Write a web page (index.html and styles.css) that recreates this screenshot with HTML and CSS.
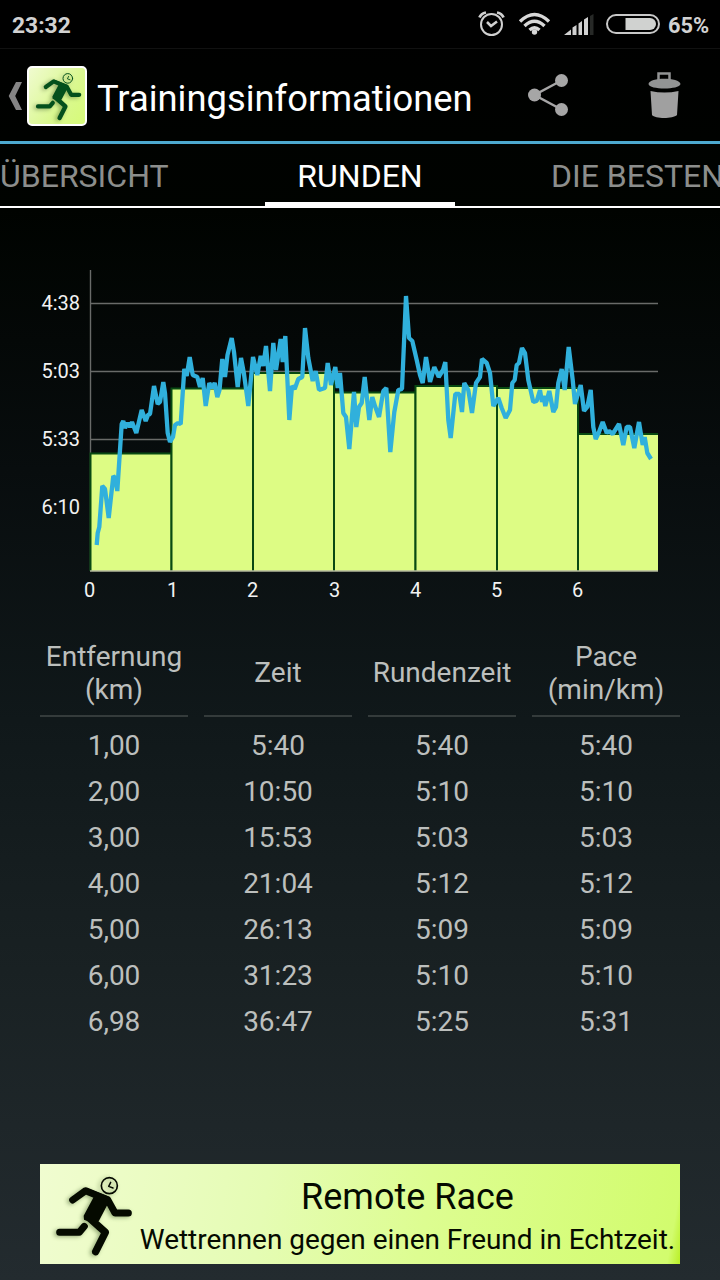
FILE: index.html
```html
<!DOCTYPE html>
<html lang="de">
<head>
<meta charset="utf-8">
<title>Trainingsinformationen</title>
<link rel="stylesheet" href="styles.css">
</head>
<body>
<svg class="defs" width="0" height="0" aria-hidden="true">
  <symbol id="runner" viewBox="70 60 245 245">
    <g fill="none" stroke="currentColor" stroke-linecap="round" stroke-linejoin="round">
      <g stroke-width="21">
        <path d="M129 135 168 107 234 134 256 174H296"/>
        <path d="M90 232H149L164 214"/>
        <path stroke-width="22" d="M180 190 227 232 198 290"/>
      </g>
      <circle cx="239" cy="92" r="24" stroke-width="5"/>
      <path stroke-width="4.500" d="M243 82 237 94 250 99"/>
    </g>
    <path fill="currentColor" d="M170 98 240 126 237 142 208 197 190 205 163 194 162 182 192 126Z"/>
  </symbol>
</svg>
<div class="screen">
  <header class="status">
    <span class="clock">23:32</span>
    <svg class="status-icons" width="196" height="32" viewBox="470 8 196 32">
      <g fill="none" stroke="#d0d0d0" stroke-width="2">
        <circle cx="491.500" cy="24.500" r="10.500"/>
        <path stroke-width="2.500" d="M487 22 491 26 497 21.500"/>
        <path stroke-width="2.800" d="M479.500 17.500Q481 13.500 486 12.500M503.500 17.500Q502 13.500 497 12.500"/>
      </g>
      <g fill="none" stroke="#d8d8d8" stroke-width="3.400">
        <path d="M520 21.500Q534.500 7.500 549 21.500"/>
        <path d="M524.500 26Q534.500 16.500 544.500 26"/>
        <path d="M529.500 30Q534.500 25.500 539.500 30"/>
      </g>
      <circle cx="534.500" cy="32" r="2.700" fill="#d8d8d8"/>
      <path fill="#d0d0d0" d="M564 35 571 29.500V35ZM572.500 27.500 576.500 25V35H572.500ZM578.500 23.500 582 21V35H578.500ZM584 19.500 588 17V35H584Z"/>
      <path fill="#272927" d="M590 16 593.500 14V35H590Z"/>
      <rect x="607" y="15" width="52" height="18" rx="9" fill="none" stroke="#c8c8c8" stroke-width="2"/>
      <path fill="#d0d2d0" d="M625.500 18H650A6 6 0 0 1 650 30H625.500Z"/>
    </svg>
    <span class="percent">65%</span>
  </header>

  <div class="actionbar">
    <svg class="back" width="14" height="30" viewBox="0 0 14 30"><path fill="#858585" d="M8 1H14L7.200 15 14 29H8L.700 15Z"/></svg>
    <div class="appicon"><svg width="49" height="49"><use href="#runner"/></svg></div>
    <h1>Trainingsinformationen</h1>
    <svg class="share" width="42" height="44" viewBox="527 73 42 44">
      <path d="M561.500 80.500 534.500 95 561.500 109.500" fill="none" stroke="#a6a6a6" stroke-width="2.500"/>
      <g fill="#a6a6a6"><circle cx="534.500" cy="95" r="6.500"/><circle cx="561.500" cy="80.500" r="6.500"/><circle cx="561.500" cy="109.500" r="6.500"/></g>
    </svg>
    <svg class="trash" width="34" height="48" viewBox="647 71 34 48">
      <path d="M658.500 80V73.500H669.500V80" fill="none" stroke="#929494" stroke-width="2.500"/>
      <path fill="#929494" d="M648.500 84C649 77 679.500 77 680.500 84C679.500 90 649 90 648.500 84Z"/>
      <path fill="#a0a0a0" d="M650.500 91Q664.500 94 678.500 91L677 115C673 119 655 119 652 115Z"/>
    </svg>
  </div>

  <nav class="tabs">
    <span class="tab first">ÜBERSICHT</span>
    <span class="tab active">RUNDEN</span>
    <span class="tab last">DIE BESTEN</span>
  </nav>

  <svg class="chart" width="720" height="350" viewBox="0 260 720 350">
    <path class="grid" d="M90 303.500H658M90 371.500H658M90 439.500H658M90.500 270V571"/>
    <g class="bars">
      <path d="M90.500 571V453.500H171.500V571"/>
      <path d="M171.500 571V388.500H253V571"/>
      <path d="M253 571V373H334V571"/>
      <path d="M334 571V392.500H415.500V571"/>
      <path d="M415.500 571V386H497V571"/>
      <path d="M497 571V388H578V571"/>
      <path d="M578 571V434H658"/>
      <path class="last-bar" d="M579 435H658V571H579Z"/>
    </g>
    <path class="cutoff" d="M90 571H658"/>
    <polyline class="pace" points="96.700,545 97.700,533 99.300,527 102.300,486 105,489 108.700,518 113.300,476 115,478 117.300,491 121.700,424 123.300,421 125,428 127.700,423 130,427 132,422 136.300,433 141.700,410 145.700,421 148,415 150,414 154,386 157.700,404 160,402 163.300,382 165,393 167.700,433 170,442 173,437 175,425 178,423 180.700,424 184.300,369 186.700,376 189.700,357 192.700,375 195,376 197.300,377 200,387 202.700,378 205.700,406 209.300,383 212,388 214.700,383 217.300,397 219.500,390 222.300,359 225,377 227.500,355 231.700,338 234,352 237.700,387 241,358 244,374 248.300,406 253,357 257.300,375 260.700,356 263.300,366 266,346 270,391 273.300,343 276,370 280.700,339 282.700,362 285.300,336 289.300,420 292,386 294.700,389 298.300,379 302.300,377 305,328 308.300,358 312.700,381 315.700,371 319,390 325,388 327.700,363 331,385 335.300,367 337.700,388 340,373 343.300,413 346,417 349.300,449 354,392 356.300,427 359,407 361.700,403 364.700,377 369.300,420 372.300,397 375,406 379,417 383.300,391 386.300,388 390.300,452 394.300,412 398.300,390 402,389 406,296 409,338 412.300,341 416.700,360 420,375 422.700,383 426,357 430,382 434.300,367 438.700,377 443,370 445.300,362 448.300,420 450.700,438 455.300,394 459.300,394 462,412 464.300,383 468.300,390 472,413 476,383 480,377 482,359 486.700,363 490,373 493.300,406 498.300,398 501.700,408 505.700,418 510,410 512.300,383 514.700,380 516.700,365 519,363 522,348 525,353 528.300,380 533.300,402 536.700,401 540,390 542,402 543.500,396 545.300,406 549.300,391 553.300,412 556,407 558.300,383 561.700,369 564.700,390 568.700,347 572.700,380 575,404 580.700,385 584,411 587.300,407 590.700,390 593.300,427 595.700,439 599,432 602.700,422 606.700,433 609,431 612.700,434 619,424 623.300,445 626.700,427 630,427 634.300,448 639,422 642.700,445 644.700,437 647.300,453 651,459"/>
    <g class="ylabels">
      <text x="80" y="309.500">4:38</text><text x="80" y="377.500">5:03</text><text x="80" y="445.500">5:33</text><text x="80" y="513.500">6:10</text>
    </g>
    <g class="xlabels">
      <text x="89.500" y="597">0</text><text x="172.500" y="597">1</text><text x="252.500" y="597">2</text><text x="334.500" y="597">3</text><text x="415.500" y="597">4</text><text x="496.500" y="597">5</text><text x="577.500" y="597">6</text>
    </g>
  </svg>

  <section class="laps">
    <div class="head">Entfernung<br>(km)</div><div class="head single">Zeit</div><div class="head single">Rundenzeit</div><div class="head">Pace<br>(min/km)</div>
    <span>1,00</span><span>5:40</span><span>5:40</span><span>5:40</span>
    <span>2,00</span><span>10:50</span><span>5:10</span><span>5:10</span>
    <span>3,00</span><span>15:53</span><span>5:03</span><span>5:03</span>
    <span>4,00</span><span>21:04</span><span>5:12</span><span>5:12</span>
    <span>5,00</span><span>26:13</span><span>5:09</span><span>5:09</span>
    <span>6,00</span><span>31:23</span><span>5:10</span><span>5:10</span>
    <span>6,98</span><span>36:47</span><span>5:25</span><span>5:31</span>
  </section>

  <aside class="banner">
    <svg class="banner-runner" width="81.700" height="81.700"><use href="#runner"/></svg>
    <div class="banner-text">
      <div class="banner-title">Remote Race</div>
      <div class="banner-sub">Wettrennen gegen einen Freund in Echtzeit.</div>
    </div>
  </aside>
</div>
</body>
</html>
```

FILE: styles.css
```css
* { box-sizing: border-box; }
body { margin: 0; background: #000; font-family: Roboto, "Noto Sans", sans-serif; }
svg { display: block; flex: none; }
.defs { position: absolute; }
.screen {
  width: 720px; height: 1280px; overflow: hidden;
  display: flex; flex-direction: column;
  background: linear-gradient(#000 0, #000300 210px, #080d0e 470px, #10181a 720px, #192123 970px, #232b2f 1280px);
}
.status {
  height: 49px; flex: none; display: flex; align-items: center;
  padding: 2px 0 0 12px; background: #000; border-bottom: 1px solid #111;
  color: #d2d2d2; font-size: 22.800px; font-weight: 700;
}
.status-icons { margin-top: -2px; }
.clock { width: 458px; }
.percent { padding-left: 2px; font-size: 21.800px; }
.actionbar {
  height: 95px; flex: none; display: flex; align-items: center;
  padding: 1px 0 0 8px; border-bottom: 3px solid #4da9cf;
}
.appicon {
  width: 60px; height: 60px; margin: 1px 0 0 5px; padding: 4px 0 0 5px; flex: none;
  border: 2px solid #fff; border-radius: 5px; color: #04501c;
  background: linear-gradient(125deg, #f0fbd0, #daf890 60%, #d6fb78);
}
.appicon svg, .banner-runner { filter: drop-shadow(-2px 1px 2px rgba(40, 70, 20, .45)); }
h1 { margin: 0; padding: 5px 0 0 10px; width: 440px; flex: none; font-size: 36.350px; font-weight: 400; color: #fff; white-space: nowrap; }
.share { margin-top: -1px; }
.trash { margin: -1px 0 0 78px; }
.tabs {
  height: 64px; flex: none; display: flex; border-bottom: 2px solid #fff;
  font-size: 32px; line-height: 64px; color: #8c8e8c; white-space: nowrap;
}
.tab { height: 62px; flex: none; }
.first { width: 265px; }
.active { width: 190px; text-align: center; color: #fff; border-bottom: 4px solid #fff; }
.last { padding-left: 96px; }
.chart { margin-top: 52px; }
.grid { fill: none; stroke: #696b69; stroke-width: 1.400; }
.bars path { fill: #ddfc84; stroke: #084a12; stroke-width: 2; }
.bars .last-bar { stroke: none; }
.cutoff { stroke: #b5ba9e; stroke-width: 1.500; }
.pace { fill: none; stroke: #30b0dc; stroke-width: 4.300; stroke-linejoin: bevel; }
.ylabels, .xlabels { fill: #f2f2f2; font-size: 20px; }
.ylabels { text-anchor: end; }
.xlabels { text-anchor: middle; }
.laps {
  margin: 30px 40px 0; display: grid; grid-template-columns: repeat(4, 148px);
  column-gap: 16px; grid-template-rows: 77px; grid-auto-rows: 46px;
  font-size: 28px; line-height: 46px; text-align: center; color: #bcbfbd;
}
.head {
  height: 77px; padding-bottom: 9px; border-bottom: 2px solid #343b3b; line-height: 33px;
  display: grid; place-content: center; white-space: nowrap;
}
.head.single { padding-bottom: 11px; }
.laps span { padding-top: 6px; }
.banner {
  margin: 125px 40px 0; height: 100px; flex: none; display: flex; color: #050a00;
  background: linear-gradient(100deg, #f0fcd0, #e5fcb4 35%, #ddfd91 60%, #d2fc6e 98%, #b9ef25);
}
.banner-runner { margin: 11px 0 0 13.300px; }
.banner-text { width: 545px; flex: none; text-align: center; white-space: nowrap; }
.banner-title { padding-top: 12px; font-size: 36px; line-height: 42px; }
.banner-sub { padding-top: 1px; font-size: 27.950px; line-height: 42px; }
```
